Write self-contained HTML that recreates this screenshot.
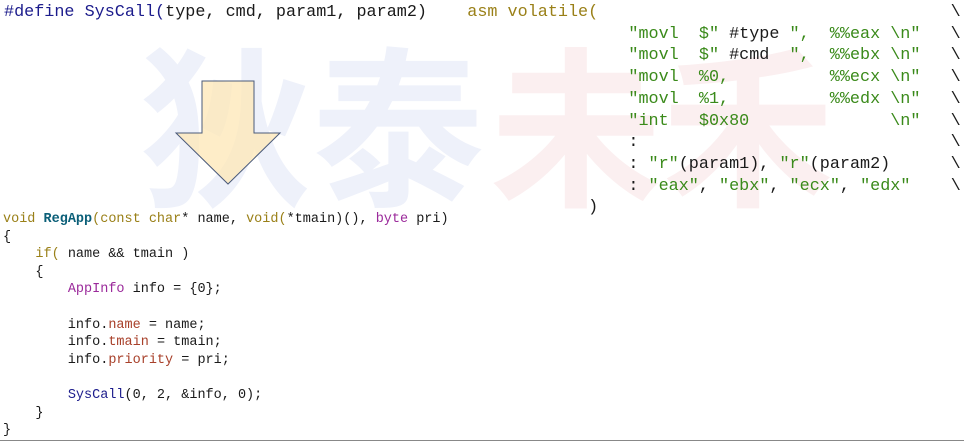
<!DOCTYPE html>
<html><head><meta charset="utf-8"><style>
body{margin:0;width:964px;height:442px;background:#fff;overflow:hidden;position:relative;font-family:"Liberation Mono",monospace}
.wm{position:absolute;top:32px;font-family:"Noto Sans CJK SC",sans-serif;font-size:172px;font-weight:bold;line-height:1}
pre{margin:0;position:absolute;font-family:"Liberation Mono",monospace;color:#1a1a1a;white-space:pre}
.top{left:4px;top:2px;font-size:16.8px;line-height:21.7px}
.bot{left:3px;top:211px;font-size:13.5px;line-height:17.6px}
.b{color:#1c1c8c}.o{color:#9a8018}.g{color:#3a8a1a}.t{color:#0b5f78;font-weight:bold}.p{color:#9b2a9b}.r{color:#a8402a}
</style></head><body>
<div class="wm" style="left:140px;color:#eef1fa">狄泰</div>
<div class="wm" style="left:490px;color:#fbeff0">未禾</div>
<svg style="position:absolute;left:0;top:0" width="964" height="442">
<polygon points="202,81 254,81 254,133 280,133 228,184 176,133 202,133" fill="#fde7b5" fill-opacity="0.75" stroke="#4a5a7a" stroke-width="1"/>
<line x1="0" y1="440.5" x2="964" y2="440.5" stroke="#888" stroke-width="1"/>
</svg>
<pre class="top"><span class="b">#define SysCall(</span>type, cmd, param1, param2)    <span class="o">asm volatile(</span>                                   \
                                                              <span class="g">"movl  $"</span> #type <span class="g">",  %%eax \n"</span>   \
                                                              <span class="g">"movl  $"</span> #cmd  <span class="g">",  %%ebx \n"</span>   \
                                                              <span class="g">"movl  %0,          %%ecx \n"</span>   \
                                                              <span class="g">"movl  %1,          %%edx \n"</span>   \
                                                              <span class="g">"int   $0x80              \n"</span>   \
                                                              :                               \
                                                              : <span class="g">"r"</span>(param1), <span class="g">"r"</span>(param2)      \
                                                              : <span class="g">"eax"</span>, <span class="g">"ebx"</span>, <span class="g">"ecx"</span>, <span class="g">"edx"</span>    \
                                                          )</pre>
<pre class="bot"><span class="o">void</span> <span class="t">RegApp</span><span class="o">(const char</span>* name, <span class="o">void(</span>*tmain)(), <span class="p">byte</span> pri)
{
    <span class="o">if(</span> name &amp;&amp; tmain )
    {
        <span class="p">AppInfo</span> info = {0};

        info.<span class="r">name</span> = name;
        info.<span class="r">tmain</span> = tmain;
        info.<span class="r">priority</span> = pri;

        <span class="b">SysCall</span>(0, 2, &amp;info, 0);
    }
}</pre>
</body></html>
